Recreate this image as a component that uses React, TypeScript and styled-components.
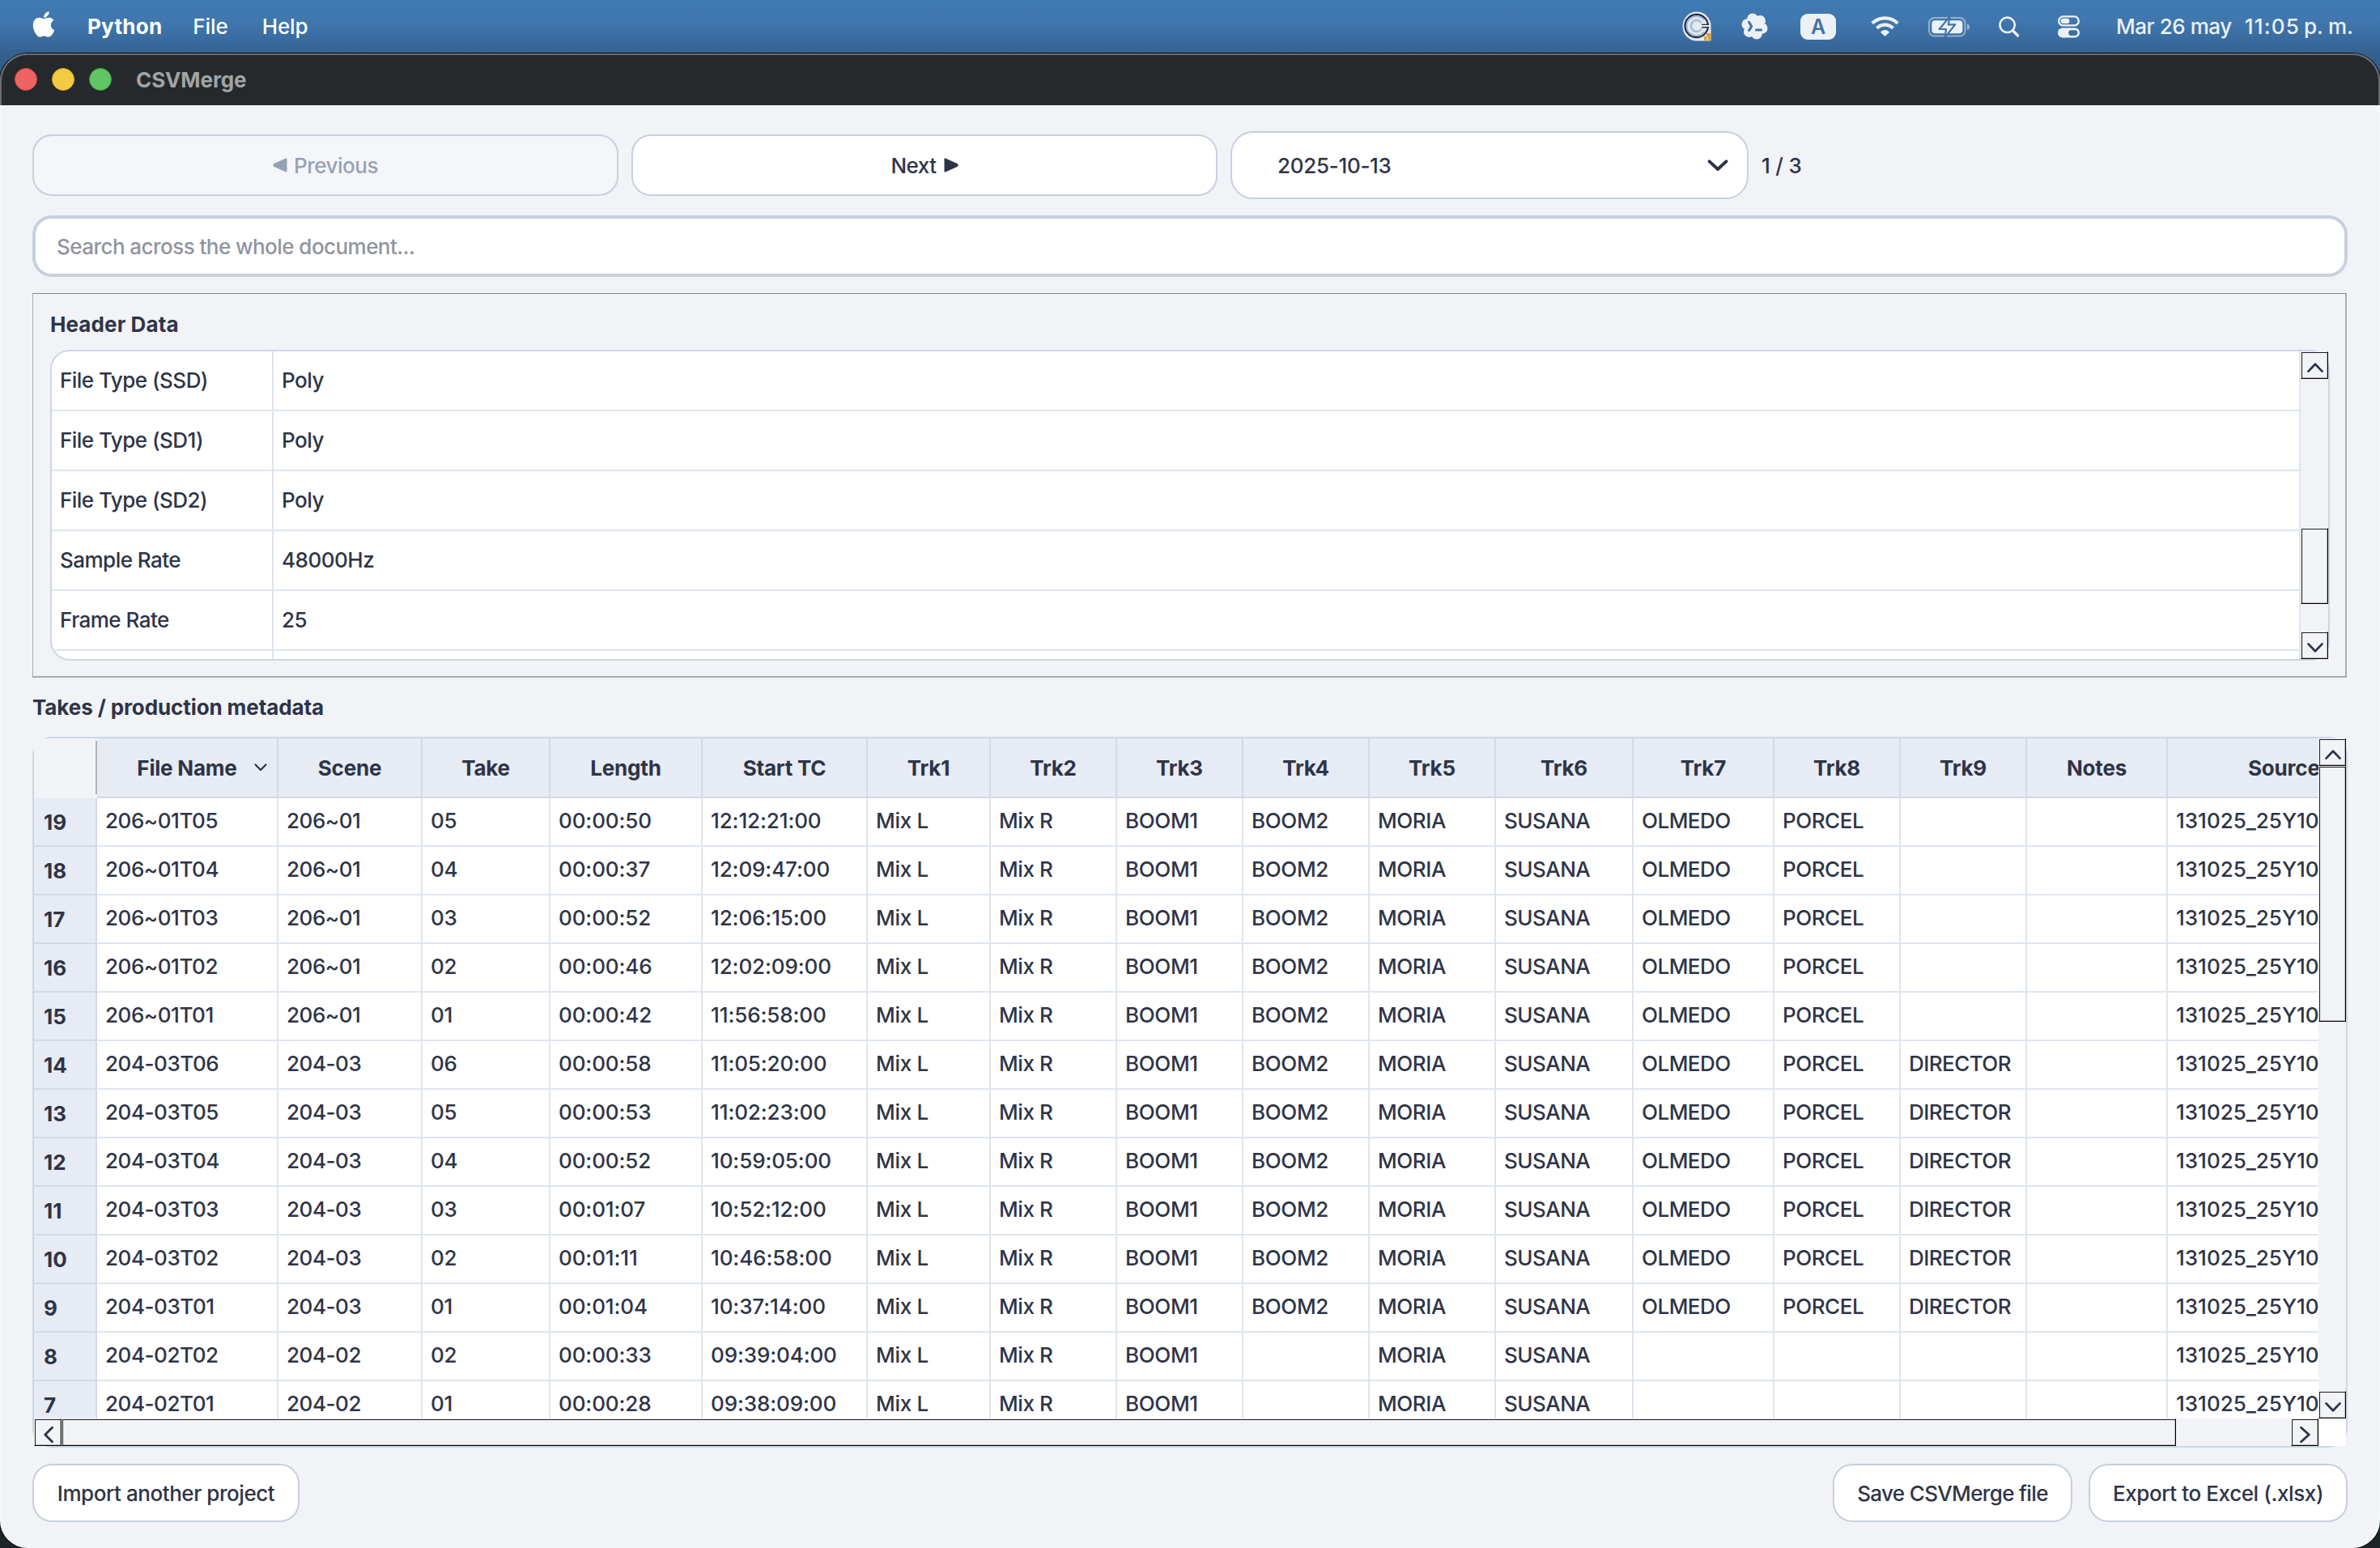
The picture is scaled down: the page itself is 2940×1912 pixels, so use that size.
import React from "react";
import styled, { createGlobalStyle } from "styled-components";
import { FaApple } from "react-icons/fa";

const ink = "#2e3447";
const surface = "#f1f3f7";
const outline = "#c8cfdd";
const grid = "#dfe5ee";
const headFill = "#e7ebf3";
const headLine = "#d3d9e6";

const GlobalStyle = createGlobalStyle`
  * { box-sizing: border-box; }
  html, body { margin: 0; padding: 0; }
  body {
    width: 2940px;
    height: 1912px;
    overflow: hidden;
    font-family: Inter, "Liberation Sans", sans-serif;
    font-size: 26px;
    font-weight: 450;
    color: ${ink};
  }
  svg { display: block; flex: none; }
`;

const Desktop = styled.div`
  display: flex;
  flex-direction: column;
  width: 2940px;
  height: 1912px;
  background: linear-gradient(#407ab1 0, #3f77ae 26px, #3b6ea3 44px, #356292 64px, #2c5480 110px, #1c2427 111px);
`;

/* ---------- menu bar ---------- */

const MenuBar = styled.header`
  display: flex;
  align-items: center;
  height: 66px;
  flex: none;
  padding: 0 0 1px 36px;
  color: #fff;
`;

const AppleMark = styled.span`
  display: flex;
  width: 36px;
  height: 65px;
  padding-top: 12px;
  justify-content: center;
  margin-right: 36px;
`;

const MenuItem = styled.span<{ $bold?: boolean; $gap?: number }>`
  font-weight: ${(p) => (p.$bold ? 700 : 500)};
  letter-spacing: ${(p) => (p.$bold ? "0.25px" : "-0.1px")};
  margin-right: ${(p) => p.$gap ?? 0}px;
  line-height: 64px;
`;

const Status = styled.div`
  display: flex;
  align-items: center;
  width: 862px;
  height: 65px;
  margin-left: auto;
  color: #ecf1f6;
`;

const StatusItem = styled.span<{ $gap: number }>`
  display: flex;
  margin-left: ${(p) => p.$gap}px;
`;

const InputBadge = styled.span`
  width: 44px;
  height: 32px;
  margin-left: 40px;
  border-radius: 9px;
  background: #ecf1f6;
  color: #3d72a8;
  font-size: 25px;
  font-weight: 600;
  line-height: 33px;
  text-align: center;
`;

const Clock = styled.span<{ $gap: number; $spacing: number }>`
  margin-left: ${(p) => p.$gap}px;
  letter-spacing: ${(p) => p.$spacing}px;
  font-weight: 500;
  line-height: 64px;
  white-space: pre;
`;

/* ---------- window ---------- */

const Window = styled.main`
  position: relative;
  display: flex;
  flex-direction: column;
  flex: 1;
  border-radius: 34px;
  overflow: hidden;
  background: ${surface};
  box-shadow: 0 0 0 1px #07090b;
  &::after {
    content: "";
    position: absolute;
    inset: 0;
    border: 2px solid rgba(255, 255, 255, 0.32);
    border-bottom-width: 1px;
    border-radius: inherit;
    pointer-events: none;
  }
`;

const TitleBar = styled.div`
  display: flex;
  align-items: center;
  gap: 18px;
  height: 64px;
  flex: none;
  padding-left: 18px;
  background: #25292c;
`;

const Light = styled.span<{ $fill: string; $rim: string }>`
  width: 28px;
  height: 28px;
  border-radius: 50%;
  background: ${(p) => p.$fill};
  border: 1px solid ${(p) => p.$rim};
`;

const WindowTitle = styled.span`
  margin-left: 12px;
  padding-top: 1px;
  font-weight: 700;
  letter-spacing: -0.1px;
  color: #a1a4a6;
`;

const Content = styled.div`
  display: flex;
  flex-direction: column;
  padding: 32px 40px 0;
`;

const Toolbar = styled.div`
  display: flex;
  align-items: center;
  gap: 16px;
  height: 84px;
`;

const NavButton = styled.button<{ $muted?: boolean }>`
  display: flex;
  align-items: center;
  justify-content: center;
  gap: ${(p) => (p.$muted ? 8 : 9)}px;
  width: 724px;
  height: 76px;
  padding: 0;
  border: 2px solid ${outline};
  border-radius: 24px;
  background: ${(p) => (p.$muted ? "#f5f6fa" : "#fff")};
  color: ${(p) => (p.$muted ? "#97a1b4" : ink)};
  font: inherit;
  letter-spacing: -0.5px;
`;

const DateSelect = styled.div`
  display: flex;
  align-items: center;
  justify-content: space-between;
  width: 640px;
  height: 84px;
  padding: 0 23px 0 56px;
  border: 2px solid ${outline};
  border-radius: 28px;
  background: #fff;
  letter-spacing: -0.3px;
`;

const PageCount = styled.span`
  letter-spacing: -0.2px;
`;

const SearchBox = styled.div`
  display: flex;
  align-items: center;
  height: 76px;
  margin-top: 20px;
  padding-left: 26px;
  border: 4px solid ${outline};
  border-radius: 24px;
  background: #fff;
  color: #9094a0;
  letter-spacing: -0.55px;
`;

/* ---------- header data ---------- */

const Group = styled.section`
  height: 475px;
  margin: 20px 1px 0 0;
  padding: 6px 19px 0 21px;
  border: solid #a9abae;
  border-width: 1px 2px 2px 1px;
  border-top-color: #82858a;
`;

const GroupTitle = styled.h2`
  margin: 0;
  font-size: 26px;
  font-weight: 700;
  line-height: 63px;
  letter-spacing: 0.1px;
`;

const SectionTitle = styled.h2`
  margin: 0;
  padding-top: 1px;
  font-size: 26px;
  font-weight: 700;
  line-height: 72px;
  letter-spacing: -0.1px;
`;

const Frame = styled.div<{ $height: number; $fill: string }>`
  display: flex;
  height: ${(p) => p.$height}px;
  border: 2px solid #ced6e2;
  border-radius: 24px;
  background: ${(p) => p.$fill};
`;

const PairList = styled.div`
  flex: 1;
  overflow: hidden;
  border-right: 2px solid ${grid};
`;

const Pair = styled.div`
  display: grid;
  grid-template-columns: 274px 1fr;
  height: 74px;
`;

const PairCell = styled.div<{ $spacing?: number }>`
  display: flex;
  align-items: center;
  padding: 0 10px 2px;
  border-bottom: 2px solid ${grid};
  letter-spacing: ${(p) => p.$spacing ?? -0.52}px;
  &:first-child { border-right: 2px solid ${grid}; }
`;

/* ---------- scroll bars ---------- */

const VBar = styled.div`
  display: flex;
  flex-direction: column;
  width: 34px;
  background: ${surface};
`;

const HBar = styled.div`
  display: flex;
  height: 34px;
  background: ${surface};
`;

const Bevel = styled.div<{ $w?: number; $h?: number }>`
  flex: none;
  width: ${(p) => p.$w ?? 34}px;
  height: ${(p) => p.$h ?? 34}px;
  border: 1px solid;
  border-color: #f1f3f5 #000 #000 #f1f3f5;
  background: ${surface};
  box-shadow: inset 1px 1px 0 #1d1d1f, inset -1px -1px 0 #b9bab8;
`;

const Track = styled.div<{ $len?: number }>`
  flex: ${(p) => (p.$len ? `0 0 ${p.$len}px` : "1")};
`;

/* ---------- takes ---------- */

const TakesBody = styled.div`
  display: flex;
  flex-direction: column;
  width: 2822px;
  flex: none;
`;

const TakesView = styled.div`
  height: 840px;
  overflow: hidden;
`;

const TakesSide = styled.div`
  display: flex;
  flex-direction: column;
  width: 34px;
`;

const Corner = styled.div`
  height: 34px;
  background: #fff;
`;

const TakeRow = styled.div<{ $head?: boolean }>`
  display: grid;
  grid-template-columns: 78px 224px 178px 158px 188px 204px 152px 156px 156px 156px 156px 170px 174px 156px 156px 174px 186px;
  height: ${(p) => (p.$head ? 74 : 60)}px;
`;

const CornerCell = styled.div`
  display: flex;
  justify-content: flex-end;
  padding: 3px 0 5px;
  background: ${surface};
`;

const CornerRule = styled.div`
  width: 2px;
  background: #b3b3b5;
`;

const HeadCell = styled.div<{ $clipped?: boolean }>`
  display: grid;
  grid-template-columns: ${(p) => (p.$clipped ? "auto" : "1fr auto 1fr")};
  align-items: center;
  padding-left: ${(p) => (p.$clipped ? 99 : 0)}px;
  border-bottom: 2px solid ${headLine};
  border-right: ${(p) => (p.$clipped ? 0 : 2)}px solid ${headLine};
  background: ${headFill};
  font-weight: 650;
  letter-spacing: -0.2px;
  white-space: nowrap;
`;

const HeadLabel = styled.span<{ $clipped?: boolean }>`
  grid-column: ${(p) => (p.$clipped ? 1 : 2)};
`;

const SortMark = styled.span`
  justify-self: end;
  padding-right: 12px;
`;

const RowHead = styled.div`
  display: flex;
  align-items: center;
  padding: 1px 0 0 12px;
  border-right: 2px solid ${headLine};
  border-bottom: 2px solid ${headLine};
  background: ${headFill};
  font-weight: 700;
`;

const Cell = styled.div<{ $spacing: number }>`
  display: flex;
  align-items: center;
  padding: 0 0 4px 10px;
  border-right: 2px solid ${grid};
  border-bottom: 2px solid ${grid};
  background: #fff;
  letter-spacing: ${(p) => p.$spacing}px;
  white-space: nowrap;
  &:last-child { border-right: 0; }
`;

const Footer = styled.footer`
  display: flex;
  gap: 20px;
  margin-top: 20px;
`;

const ActionButton = styled.button<{ $w: number; $spacing: number; $push?: boolean }>`
  width: ${(p) => p.$w}px;
  height: 72px;
  margin-left: ${(p) => (p.$push ? "auto" : "0")};
  padding: 0;
  border: 2px solid ${outline};
  border-radius: 24px;
  background: #fff;
  color: ${ink};
  font: inherit;
  letter-spacing: ${(p) => p.$spacing}px;
`;

/* ---------- drawings ---------- */

const chevrons = {
  up: "M9.5 24.6 L18 15.8 L26.5 24.6",
  down: "M9.5 15.4 L18 24.2 L26.5 15.4",
  left: "M22.5 11.2 L13.8 20 L22.5 28.8",
  right: "M12.5 11.2 L22.3 20 L12.5 28.8",
};

function ScrollButton({ dir }: { dir: keyof typeof chevrons }) {
  return (
    <Bevel>
      <svg width="32" height="32" viewBox="1 1 32 32" fill="none" stroke={ink} strokeWidth="2.8" strokeLinecap="round" strokeLinejoin="round">
        <path d={chevrons[dir]} />
      </svg>
    </Bevel>
  );
}

const Triangle = ({ left }: { left?: boolean }) => (
  <svg width="18" height="18" viewBox="0 0 18 18" fill="currentColor" stroke="currentColor" strokeWidth="2" strokeLinejoin="round">
    <path d={left ? "M16.5 1.4 V16.6 L1.5 9.8 V8.2 Z" : "M1.5 1.4 V16.6 L16.5 9.8 V8.2 Z"} />
  </svg>
);

const GrammarIcon = () => (
  <svg width="36" height="37" viewBox="0 0 36 37">
    <path d="M18 .5 A17.5 17.5 0 0 1 35.5 18 V36.5 H18 A17.5 18 0 0 1 18 .5Z" fill="#e9e9e7" />
    <circle cx="17.7" cy="18" r="14.2" fill="#e4e8ec" stroke="#1f2c4c" strokeWidth="2.2" />
    <path d="M27 10.5 A12 12 0 1 0 27 25.5" fill="none" stroke="#8fb0d0" strokeWidth="1.4" />
    <path d="M23.5 14 A7 7 0 1 0 23.5 22" fill="none" stroke="#9dbfdf" strokeWidth="2.6" />
    <path d="M18 16 H34 V20 H18Z" fill="#e9edf0" />
    <path d="M24 16.4 H33 M24 19.8 H33" stroke="#1f2c4c" strokeWidth="1.4" />
    <path d="M27 36 V31 H30 V27 H35.5 V36Z" fill="#d9a341" />
    <path d="M30 36 V31 H32 V36Z" fill="#f0cf86" />
  </svg>
);

const TerminalBlob = () => (
  <svg width="33" height="33" viewBox="0 0 33 33">
    <g fill="#ecf1f6">
      <circle cx="16.5" cy="16.5" r="12.5" />
      <circle cx="14" cy="7.4" r="6.8" />
      <circle cx="23.2" cy="9.8" r="6.8" />
      <circle cx="25.7" cy="19" r="6.8" />
      <circle cx="19" cy="25.7" r="6.8" />
      <circle cx="9.8" cy="23.2" r="6.8" />
      <circle cx="7.3" cy="14" r="6.8" />
    </g>
    <path d="M9.5 11.3 L12.6 16.6 L9.5 21.6 M18.5 21 H24.5" fill="none" stroke="#3f73a9" strokeWidth="3" strokeLinecap="round" strokeLinejoin="round" />
  </svg>
);

const WifiIcon = () => (
  <svg width="35" height="26" viewBox="0 0 35 26" fill="none" stroke="currentColor" strokeWidth="4.2">
    <path d="M1.8 8.8 A22.3 22.3 0 0 1 33.2 8.8" />
    <path d="M7.5 14.8 A14.2 14.2 0 0 1 27.5 14.8" />
    <path d="M17.5 24 L13 19.6 A6.5 6.5 0 0 1 22 19.6 Z" fill="currentColor" strokeWidth="1.6" strokeLinejoin="round" />
  </svg>
);

const BatteryIcon = () => (
  <svg width="52" height="26" viewBox="0 0 52 26">
    <rect x="1" y="2" width="44.5" height="22.5" rx="6.5" fill="none" stroke="#ecf1f6" strokeOpacity=".5" strokeWidth="2" />
    <rect x="4.3" y="5.2" width="38" height="16" rx="4" fill="#ecf1f6" />
    <path d="M48 9.5 Q51 10.5 51 13.2 Q51 16 48 17 Z" fill="#ecf1f6" fillOpacity=".55" />
    <path d="M26.6 0.6 L13.6 16 H22 L20.6 26 L33.2 10.4 H24.8 Z" fill="#ecf1f6" stroke="#3e73a9" strokeWidth="2.2" strokeLinejoin="round" />
  </svg>
);

const SearchIcon = () => (
  <svg width="26" height="26" viewBox="0 0 26 26" fill="none" stroke="currentColor" strokeLinecap="round">
    <circle cx="10.6" cy="10.8" r="9.2" strokeWidth="2.6" />
    <path d="M17.6 18 L23.6 24" strokeWidth="3.4" />
  </svg>
);

const ControlIcon = () => (
  <svg width="27" height="28" viewBox="0 0 27 28">
    <rect x="1.2" y="1.4" width="24.6" height="11" rx="5.5" fill="none" stroke="currentColor" strokeWidth="2.4" />
    <rect x="3.8" y="3.8" width="10.6" height="6.2" rx="3.1" fill="currentColor" />
    <rect x="0" y="15.6" width="27" height="12" rx="6" fill="currentColor" />
    <rect x="13.2" y="18.2" width="11.2" height="6.8" rx="3.4" fill="#3b6ea2" />
  </svg>
);

/* ---------- data ---------- */

const headerPairs: [string, string][] = [
  ["File Type (SSD)", "Poly"],
  ["File Type (SD1)", "Poly"],
  ["File Type (SD2)", "Poly"],
  ["Sample Rate", "48000Hz"],
  ["Frame Rate", "25"],
  ["", ""],
];

const columns = ["File Name", "Scene", "Take", "Length", "Start TC", "Trk1", "Trk2", "Trk3", "Trk4", "Trk5", "Trk6", "Trk7", "Trk8", "Trk9", "Notes", "Source"];
const spacings = [-0.45, -0.45, -0.3, -0.1, -0.1, -0.3, -0.4, -0.35, -0.35, -0.4, -0.5, -0.5, -0.45, -0.55, 0, 0];

type Take = [number, string, string, string, string];
const takes: Take[] = [
  [19, "206~01", "05", "00:00:50", "12:12:21:00"],
  [18, "206~01", "04", "00:00:37", "12:09:47:00"],
  [17, "206~01", "03", "00:00:52", "12:06:15:00"],
  [16, "206~01", "02", "00:00:46", "12:02:09:00"],
  [15, "206~01", "01", "00:00:42", "11:56:58:00"],
  [14, "204-03", "06", "00:00:58", "11:05:20:00"],
  [13, "204-03", "05", "00:00:53", "11:02:23:00"],
  [12, "204-03", "04", "00:00:52", "10:59:05:00"],
  [11, "204-03", "03", "00:01:07", "10:52:12:00"],
  [10, "204-03", "02", "00:01:11", "10:46:58:00"],
  [9, "204-03", "01", "00:01:04", "10:37:14:00"],
  [8, "204-02", "02", "00:00:33", "09:39:04:00"],
  [7, "204-02", "01", "00:00:28", "09:38:09:00"],
];

function cellsFor([, scene, take, length, start]: Take): string[] {
  const full = scene !== "204-02";
  return [
    `${scene}T${take}`, scene, take, length, start,
    "Mix L", "Mix R", "BOOM1", full ? "BOOM2" : "", "MORIA", "SUSANA",
    full ? "OLMEDO" : "", full ? "PORCEL" : "", scene === "204-03" ? "DIRECTOR" : "",
    "", "131025_25Y10",
  ];
}

export default function App() {
  return (
    <Desktop>
      <GlobalStyle />
      <MenuBar>
        <AppleMark><FaApple size={36} /></AppleMark>
        <MenuItem $bold $gap={38}>Python</MenuItem>
        <MenuItem $gap={42}>File</MenuItem>
        <MenuItem>Help</MenuItem>
        <Status>
          <StatusItem $gap={0}><GrammarIcon /></StatusItem>
          <StatusItem $gap={37}><TerminalBlob /></StatusItem>
          <InputBadge>A</InputBadge>
          <StatusItem $gap={43}><WifiIcon /></StatusItem>
          <StatusItem $gap={36}><BatteryIcon /></StatusItem>
          <StatusItem $gap={35}><SearchIcon /></StatusItem>
          <StatusItem $gap={47}><ControlIcon /></StatusItem>
          <Clock $gap={45} $spacing={-0.45}>Mar 26 may</Clock>
          <Clock $gap={16} $spacing={1.2}>11:05</Clock>
          <Clock $gap={5} $spacing={-0.2}>p. m.</Clock>
        </Status>
      </MenuBar>

      <Window>
        <TitleBar>
          <Light $fill="#ee6465" $rim="#e0443f" />
          <Light $fill="#f4ca42" $rim="#dfab1d" />
          <Light $fill="#63c466" $rim="#2fa83a" />
          <WindowTitle>CSVMerge</WindowTitle>
        </TitleBar>

        <Content>
          <Toolbar>
            <NavButton $muted><Triangle left />Previous</NavButton>
            <NavButton>Next<Triangle /></NavButton>
            <DateSelect>
              2025-10-13
              <svg width="26" height="16" viewBox="0 0 26 16" fill="none" stroke={ink} strokeWidth="4" strokeLinecap="round" strokeLinejoin="round">
                <path d="M2.6 3.4 L13 13 L23.4 3.4" />
              </svg>
            </DateSelect>
            <PageCount>1 / 3</PageCount>
          </Toolbar>

          <SearchBox>Search across the whole document...</SearchBox>

          <Group>
            <GroupTitle>Header Data</GroupTitle>
            <Frame $height={384} $fill="#fff">
              <PairList>
                {headerPairs.map(([name, value], i) => (
                  <Pair key={i}>
                    <PairCell>{name}</PairCell>
                    <PairCell $spacing={-0.5}>{value}</PairCell>
                  </Pair>
                ))}
              </PairList>
              <VBar>
                <ScrollButton dir="up" />
                <Track $len={184} />
                <Bevel $h={94} />
                <Track />
                <ScrollButton dir="down" />
              </VBar>
            </Frame>
          </Group>

          <SectionTitle>Takes / production metadata</SectionTitle>

          <Frame $height={878} $fill={surface}>
            <TakesBody>
              <TakesView>
                <TakeRow $head>
                  <CornerCell><CornerRule /></CornerCell>
                  {columns.map((name, i) => {
                    const clipped = i === columns.length - 1;
                    return (
                      <HeadCell key={name} $clipped={clipped}>
                        <HeadLabel $clipped={clipped}>{name}</HeadLabel>
                        {i === 0 && (
                          <SortMark>
                            <svg width="16" height="12" viewBox="0 0 16 12" fill="none" stroke={ink} strokeWidth="2.2" strokeLinecap="round" strokeLinejoin="round">
                              <path d="M1.6 2.4 L8 9 L14.4 2.4" />
                            </svg>
                          </SortMark>
                        )}
                      </HeadCell>
                    );
                  })}
                </TakeRow>
                {takes.map((take) => (
                  <TakeRow key={take[0]}>
                    <RowHead>{take[0]}</RowHead>
                    {cellsFor(take).map((text, i) => (
                      <Cell key={i} $spacing={spacings[i]}>{text}</Cell>
                    ))}
                  </TakeRow>
                ))}
              </TakesView>
              <HBar>
                <ScrollButton dir="left" />
                <Bevel $w={2612} />
                <Track />
                <ScrollButton dir="right" />
              </HBar>
            </TakesBody>
            <TakesSide>
              <VBar>
                <ScrollButton dir="up" />
                <Bevel $h={316} />
                <Track $len={456} />
                <ScrollButton dir="down" />
              </VBar>
              <Corner />
            </TakesSide>
          </Frame>

          <Footer>
            <ActionButton $w={330} $spacing={-0.44}>Import another project</ActionButton>
            <ActionButton $w={296} $spacing={-0.65} $push>Save CSVMerge file</ActionButton>
            <ActionButton $w={320} $spacing={-0.4}>Export to Excel (.xlsx)</ActionButton>
          </Footer>
        </Content>
      </Window>
    </Desktop>
  );
}
